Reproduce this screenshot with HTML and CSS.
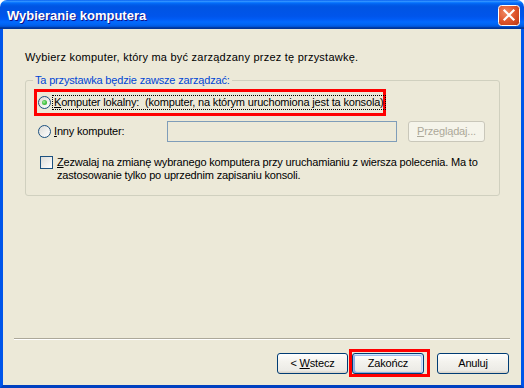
FILE: index.html
```html
<!DOCTYPE html>
<html lang="pl">
<head>
<meta charset="utf-8">
<title>Wybieranie komputera</title>
<link rel="stylesheet" href="styles.css">
</head>
<body>
<div class="window">
  <div class="titlebar">
    <span class="title">Wybieranie komputera</span>
    <span class="close" aria-label="Zamknij">
      <svg width="22" height="21" viewBox="0 0 22 21">
        <defs>
          <radialGradient id="cg" cx="0.35" cy="0.35" r="0.8">
            <stop offset="0" stop-color="#F08A63"/>
            <stop offset="0.55" stop-color="#E0562D"/>
            <stop offset="1" stop-color="#C33D16"/>
          </radialGradient>
        </defs>
        <rect x="0.5" y="0.5" width="21" height="20" rx="3" ry="3" fill="url(#cg)" stroke="#FFFFFF" stroke-width="1"/>
        <path d="M6.5 5.5 L15.5 14.5 M15.5 5.5 L6.5 14.5" stroke="#FFFFFF" stroke-width="2.2" stroke-linecap="square"/>
      </svg>
    </span>
  </div>
  <div class="frame">
    <div class="main">
      <p class="intro">Wybierz komputer, który ma być zarządzany przez tę przystawkę.</p>
      <fieldset class="group">
        <legend>Ta przystawka będzie zawsze zarządzać:</legend>
        <div class="row local">
          <span class="radio checked"></span>
          <span class="focus"><u>K</u>omputer lokalny:&nbsp; (komputer, na którym uruchomiona jest ta konsola)</span>
        </div>
        <div class="row other">
          <span class="radio"></span>
          <span class="label"><u>I</u>nny komputer:</span>
          <span class="textbox"></span>
          <span class="btn disabled"><span><u>P</u>rzeglądaj...</span></span>
        </div>
        <div class="row check">
          <span class="checkbox"></span>
          <span class="checktext"><u>Z</u>ezwalaj na zmianę wybranego komputera przy uruchamianiu z wiersza polecenia. Ma to<br>zastosowanie tylko po uprzednim zapisaniu konsoli.</span>
        </div>
      </fieldset>
    </div>
    <div class="spacer"></div>
    <div class="separator"></div>
    <div class="buttons">
      <span class="btn back"><span>&lt; <u>W</u>stecz</span></span>
      <span class="highlight"><span class="btn default"><span>Zakończ</span></span></span>
      <span class="btn cancel"><span>Anuluj</span></span>
    </div>
  </div>
</div>
</body>
</html>
```
FILE: styles.css
```css
html, body {
  margin: 0;
  padding: 0;
  background: #FFFFFF;
}

body {
  font-family: "Liberation Sans", Arial, sans-serif;
  font-size: 11px;
  line-height: 13px;
  letter-spacing: -0.17px;
  color: #000000;
}

.window {
  width: 524px;
  height: 388px;
  display: flex;
  flex-direction: column;
}

.titlebar {
  height: 29px;
  box-sizing: border-box;
  padding: 2px 4px 0 7px;
  display: flex;
  align-items: center;
  justify-content: space-between;
  border-radius: 7px 7px 0 0;
  background: linear-gradient(to bottom,
    #0058EE 0%, #3593FF 4%, #288EFF 6%, #127DFF 8%, #036FFC 10%,
    #0262EE 14%, #0057E5 20%, #0054E3 24%, #0055EB 56%, #005BF5 66%,
    #026AFE 76%, #0062EF 86%, #0052D6 92%, #0040AB 94%, #003092 100%);
}

.title {
  color: #FFFFFF;
  font-weight: bold;
  font-size: 13px;
  line-height: 15px;
  letter-spacing: 0;
  text-shadow: 1px 1px 0 #0F1089;
}

.close {
  display: flex;
  width: 22px;
  height: 21px;
}

.frame {
  flex: 1;
  display: flex;
  flex-direction: column;
  background: #ECE9D8;
  border-left: 3px solid #0055EA;
  border-right: 3px solid #0055EA;
  border-bottom: 3px solid #0040C0;
}

.main {
  padding: 22px 21px 0 22px;
}

.intro {
  margin: 0;
  letter-spacing: 0.23px;
}

.group {
  margin: 10px 0 0 0;
  padding: 2px 0 13px 0;
  border: 1px solid #D0D0BF;
  border-radius: 3px;
  min-width: 0;
}

.group legend {
  margin-left: 7px;
  padding: 0 2px;
  color: #0046D5;
  line-height: 13px;
}

.row {
  display: flex;
  align-items: center;
}

.local {
  margin-left: 8px;
  width: 352px;
  height: 27px;
  box-sizing: border-box;
  border: 3px solid #FF0000;
  padding-left: 1px;
}

.radio {
  width: 13px;
  height: 13px;
  box-sizing: border-box;
  border: 1px solid #1C5180;
  border-radius: 50%;
  background: linear-gradient(135deg, #DCDCD7, #FFFFFF);
  display: flex;
  align-items: center;
  justify-content: center;
  flex: none;
}

.radio.checked::after {
  content: "";
  width: 5px;
  height: 5px;
  border-radius: 50%;
  background: radial-gradient(circle at 40% 40%, #A9F0A6 0%, #4BC649 45%, #21A121 100%);
}

.focus {
  margin-left: 1px;
  padding: 0 1px;
  border: 1px dotted #000000;
  white-space: nowrap;
}

.other {
  margin-top: 5px;
  height: 21px;
  padding-left: 12px;
}

.other .label {
  margin-left: 3px;
  width: 113px;
  flex: none;
}

.textbox {
  width: 230px;
  height: 21px;
  box-sizing: border-box;
  border: 1px solid #7F9DB9;
  background: #ECE9D8;
  flex: none;
}

.btn {
  display: flex;
  align-items: center;
  justify-content: center;
  height: 21px;
  box-sizing: border-box;
  border: 1px solid #003C74;
  border-radius: 3px;
  background: linear-gradient(180deg, #FFFFFF 0%, #F4F3EE 40%, #ECEBE6 86%, #D6D0C5 100%);
  flex: none;
  white-space: pre;
}

.btn.disabled {
  margin-left: 11px;
  width: 77px;
  border-color: #C9C7BA;
  background: #F5F4EA;
  color: #ACA899;
}

.check {
  margin-top: 14px;
  padding-left: 14px;
  align-items: flex-start;
}

.checkbox {
  width: 13px;
  height: 13px;
  box-sizing: border-box;
  border: 1px solid #1C5180;
  background: linear-gradient(135deg, #DCDCD7, #FFFFFF);
  flex: none;
}

.checktext {
  margin-left: 4px;
  white-space: nowrap;
}

.spacer {
  flex: 1;
}

.separator {
  margin: 0 11px;
  border-top: 1px solid #ACA899;
  border-bottom: 1px solid #FFFFFF;
}

.buttons {
  display: flex;
  justify-content: flex-end;
  align-items: center;
  padding: 9px 12px 8px 0;
}

.btn.back {
  width: 71px;
  margin-right: 1px;
}

.highlight {
  display: flex;
  border: 3px solid #FF0000;
  padding: 1px 3px 0 0;
}

.btn.default {
  width: 72px;
  box-shadow: inset -1px 1px #CEE7FF, inset 1px 2px #98B8EA, inset -2px 2px #BCD4F6, inset 1px -1px #89ADE4, inset 2px -1px #89ADE4;
}

.btn.cancel {
  width: 72px;
  margin-left: 7px;
}
```
